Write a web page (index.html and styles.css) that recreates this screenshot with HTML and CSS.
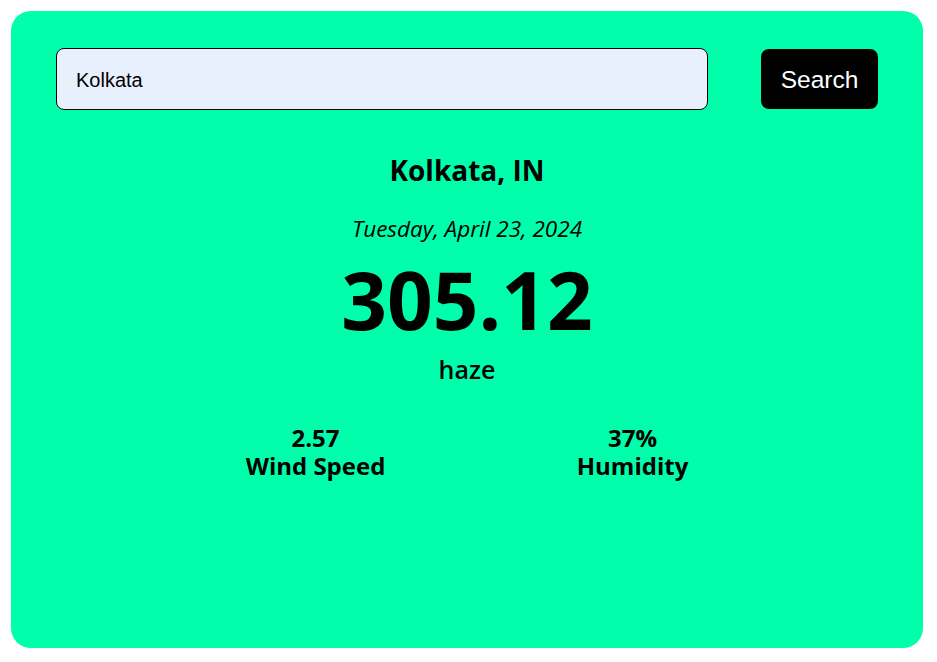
FILE: index.html
```html
<!DOCTYPE html>
<html>
<head>
<meta charset="utf-8">
<link rel="stylesheet" href="styles.css">
</head>
<body>
<div class="card">
  <div class="search-row">
    <input class="search-input" type="text" value="Kolkata">
    <button class="search-btn">Search</button>
  </div>
  <div class="weather">
    <h2 class="city">Kolkata, IN</h2>
    <p class="date">Tuesday, April 23, 2024</p>
    <div class="temp">305.12</div>
    <p class="desc">haze</p>
    <div class="stats">
      <div class="stat"><div>2.57</div><div>Wind Speed</div></div>
      <div class="stat"><div>37%</div><div>Humidity</div></div>
    </div>
  </div>
</div>
</body>
</html>
```
FILE: styles.css
```css
html, body { margin: 0; padding: 0; background: #fff; }
body { padding: 11px 14px 14px 11px; }
.card {
  background: #00ffab;
  border-radius: 20px;
  height: 637px;
  box-sizing: border-box;
  padding: 37px 45px;
  font-family: "Open Sans", "Noto Sans", sans-serif;
  color: #000;
}
.search-row { display: flex; align-items: center; justify-content: space-between; }
.search-input {
  width: 652px; height: 62px; box-sizing: border-box;
  border: 1px solid #000; border-radius: 8px;
  background: #e8f0fe;
  padding: 2px 19px 0;
  font-family: "Liberation Sans", Arial, sans-serif;
  font-size: 20px; color: #000; outline: none;
}
.search-btn {
  width: 117px; height: 60px; border: none; border-radius: 8px;
  background: #000; color: #fff;
  font-family: "Liberation Sans", Arial, sans-serif; font-size: 24.5px;
  padding: 2px 0 0;
}
.weather { text-align: center; }
.city { font-size: 28px; font-weight: 700; margin: 41px 0 0; line-height: 38px; }
.date { font-size: 22.5px; font-style: italic; margin: 25px 0 0; line-height: 30px; }
.temp { font-size: 80px; font-weight: 700; line-height: 100px; margin-top: 5px; }
.desc { font-size: 25px; font-weight: 600; margin: 4px 0 0; line-height: 32px; }
.stats { width: 634px; margin: 39px auto 0; display: flex; justify-content: space-around; }
.stat { font-size: 24px; font-weight: 700; line-height: 28px; }
```
